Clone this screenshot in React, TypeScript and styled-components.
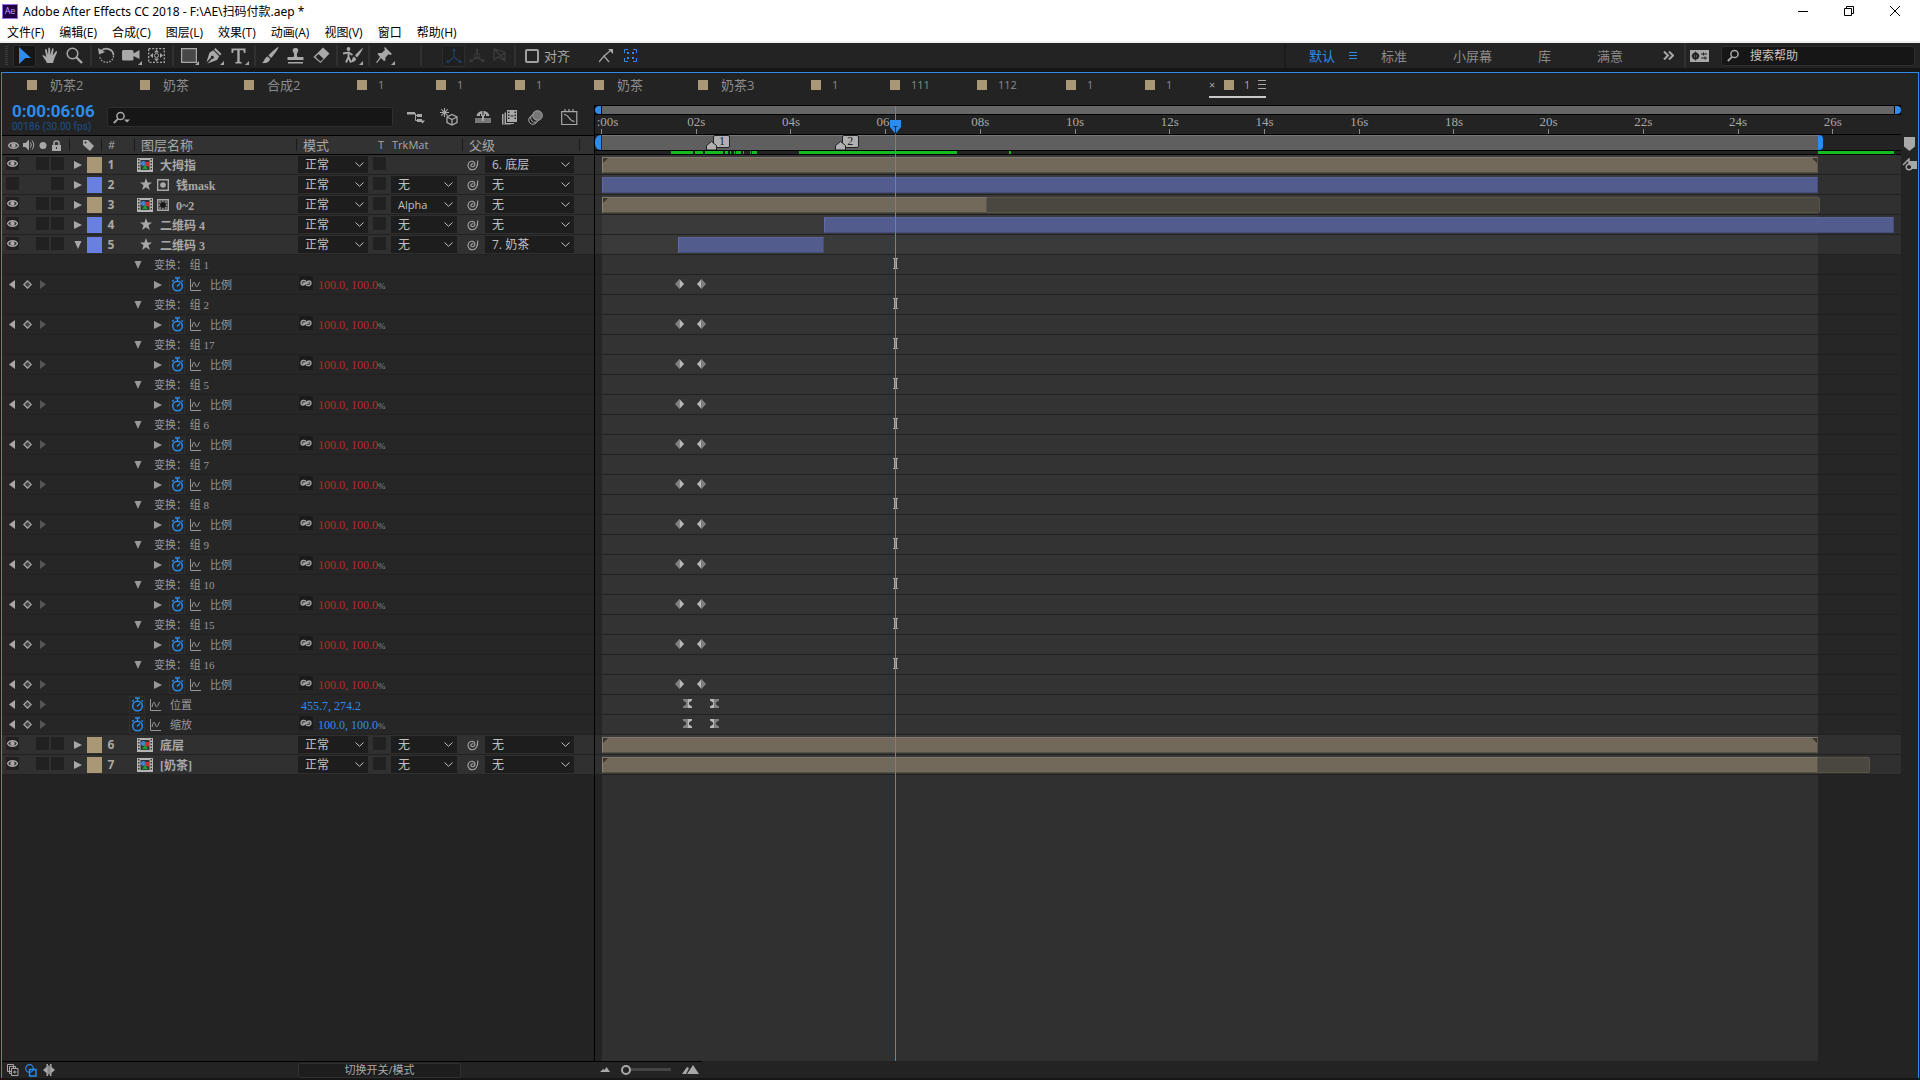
import React from 'react';
import styled, { createGlobalStyle, css } from 'styled-components';

const UI = '"Open Sans", "Noto Sans CJK SC", sans-serif';
const SONG = '"Liberation Serif", "Noto Sans CJK SC", serif';
const BLUE = '#2d8ceb';

const GlobalStyle = createGlobalStyle`
  *, *::before, *::after { box-sizing: border-box; }
  body { margin: 0; background: #161616; overflow: hidden; }
  button, input, select { font: inherit; color: inherit; margin: 0; }
  svg { display: block; flex: none; }
`;

/* ---------- time scale ---------- */

const SPAN = 27.43;
const pct = (t: number) => `${(t / SPAN) * 100}%`;
const WORK_END = 25.67;
const PLAYHEAD = 6.19;

/* ---------- shell ---------- */

const Window = styled.div`
  display: flex;
  flex-direction: column;
  height: 100vh;
  padding-bottom: 2px;
  background: #161616;
  color: #a8a8a8;
  font: 12px/16px ${UI};
`;

const TitleBar = styled.header`
  display: flex;
  align-items: center;
  height: 22px;
  padding: 0 2px;
  background: #fff;
  color: #000;
`;

const AppBadge = styled.span`
  width: 16px;
  height: 15px;
  border: 1px solid #9a6cf0;
  background: #1f0040;
  color: #c99bff;
  font-size: 9px;
  line-height: 12px;
  text-align: center;
`;

const Title = styled.h1`
  flex: 1;
  margin: 2px 0 0 5px;
  font: 400 12px/16px "Noto Sans", "Noto Sans CJK SC", sans-serif;
`;

const WindowButton = styled.button`
  display: grid;
  place-items: center;
  width: 46px;
  height: 20px;
  padding: 0;
  border: 0;
  background: none;
`;

const MenuBar = styled.nav`
  display: flex;
  gap: 15px;
  height: 21px;
  padding: 3px 7px 0;
  border-bottom: 2px solid #f0f0f0;
  background: #fff;
  color: #000;
`;

const MenuItem = styled.button`
  height: 16px;
  padding: 0;
  border: 0;
  background: none;
  font-size: 12px;
  white-space: nowrap;
`;

const Toolbar = styled.div`
  display: flex;
  align-items: center;
  height: 25px;
  margin-bottom: 4px;
  padding: 0 5px;
  background: #232323;
`;

const Grip = styled.span`
  width: 3px;
  height: 19px;
  margin-right: 4px;
  background: repeating-linear-gradient(#3c3c3c 0 1px, #232323 1px 2px);
`;

const Tool = styled.button<{ $active?: boolean; $dim?: boolean }>`
  position: relative;
  display: grid;
  place-items: center;
  width: 23px;
  height: 22px;
  margin: 0 ${p => (p.$dim ? 0 : 1)}px;
  padding: 0;
  border: 1px solid ${p => (p.$active ? '#2d2d2d' : 'transparent')};
  border-radius: 2px;
  background: ${p => (p.$active ? (p.$dim ? '#1f1f1f' : '#161616') : 'none')};
  color: ${p => (p.$dim ? '#3c3c3c' : '#a8a8a8')};
`;

const Corner = styled.i`
  position: absolute;
  right: 0;
  bottom: 1px;
  border: 2px solid;
  border-color: transparent #a8a8a8 #a8a8a8 transparent;
`;

const Divider = styled.span<{ $wide?: boolean }>`
  width: 2px;
  height: 21px;
  margin: 0 ${p => (p.$wide ? 20 : 2)}px 0 ${p => (p.$wide ? 23 : 3)}px;
  background: #303030;
`;

const SnapLabel = styled.label`
  display: flex;
  align-items: center;
  gap: 5px;
  margin: 0 29px 0 7px;
  font-size: 13px;
`;

const Check = styled.input`
  appearance: none;
  width: 14px;
  height: 14px;
  border: 2px solid #a0a0a0;
  border-radius: 2px;
`;

const SnapIcons = styled.div`
  display: flex;
  gap: 11px;
`;

const Workspaces = styled.div`
  display: flex;
  align-items: center;
  height: 100%;
  margin-left: auto;
  border-left: 2px solid #1b1b1b;
`;

const Workspace = styled.button<{ $active?: boolean }>`
  display: flex;
  align-items: center;
  gap: 14px;
  padding: 1px ${p => (p.$active ? 1 : 23)}px 0 23px;
  border: 0;
  background: none;
  color: ${p => (p.$active ? BLUE : '#8c8c8c')};
  font-size: 13px;
  white-space: nowrap;
`;

const IconButton = styled.button`
  display: grid;
  place-items: center;
  padding: 0;
  border: 0;
  background: none;
`;

const WorkspaceEnd = styled.div`
  display: flex;
  align-items: center;
  gap: 12px;
  height: 100%;
  margin-left: 10px;
  padding-left: 4px;
  border-left: 2px solid #303030;
`;

const SearchBox = styled.label<{ $width: number }>`
  display: flex;
  align-items: center;
  gap: 10px;
  width: ${p => p.$width}px;
  height: 20px;
  padding: 0 5px;
  border: 1px solid #2e2e2e;
  border-radius: 3px;
  background: #161616;
`;

const SearchInput = styled.input`
  flex: 1;
  min-width: 0;
  padding: 1px 0 0;
  border: 0;
  outline: 0;
  background: none;
  font-size: 12px;
  &::placeholder { color: #c4c4c4; opacity: 1; }
`;

/* ---------- timeline panel ---------- */

const Panel = styled.main`
  display: flex;
  flex: 1;
  flex-direction: column;
  min-height: 0;
  margin: 0 1px;
  border: 1px solid ${BLUE};
  border-bottom: 0;
  background: #232323;
`;

const Tabs = styled.div`
  display: flex;
  height: 32px;
  padding-left: 25px;
`;

const Tab = styled.button<{ $width: number; $digits?: boolean }>`
  display: flex;
  align-items: center;
  gap: ${p => (p.$digits ? 11 : 13)}px;
  flex: none;
  width: ${p => p.$width}px;
  height: 24px;
  padding: 0;
  border: 0;
  background: none;
  color: #8c8c8c;
  font-size: ${p => (p.$digits ? 11 : 13)}px;
  line-height: 14px;
  white-space: nowrap;
`;

const ActiveTab = styled.div`
  display: flex;
  align-items: center;
  height: 25px;
  margin-left: -15px;
  border-bottom: 2px solid #c8c8c8;
`;

const CloseTab = styled.button`
  width: 15px;
  height: 16px;
  padding: 0;
  border: 0;
  background: none;
  font-size: 11px;
  line-height: 16px;
  text-align: left;
`;

const TabName = styled.span`
  width: 14px;
  margin-left: 10px;
  font-size: 11px;
  line-height: 14px;
`;

const Swatch = styled.i`
  width: 10px;
  height: 10px;
  background: #a99776;
`;

const Body = styled.div`
  display: grid;
  grid-template-columns: 593px minmax(0, 1fr) 17px;
  flex: 1;
  min-height: 0;
`;

const Outline = styled.section`
  border-right: 1px solid #000;
`;

const Controls = styled.div`
  display: flex;
  align-items: center;
  height: 30px;
  padding: 0 16px 6px 10px;
`;

const Clock = styled.div`
  width: 95px;
  font-family: Roboto, sans-serif;
  white-space: nowrap;
`;

const Timecode = styled.div`
  color: ${BLUE};
  font-size: 17px;
  font-weight: 700;
  line-height: 20px;
`;

const Frames = styled.div`
  color: #1d5088;
  font-size: 10px;
  line-height: 12px;
`;

const ControlIcons = styled.div`
  display: grid;
  grid-template-columns: 33px 35px 27px 26px 33px 17px;
  align-items: center;
  justify-items: start;
  margin-left: 14px;
`;

const Columns = styled.div`
  display: flex;
  align-items: center;
  height: 20px;
  border-top: 1px solid #000;
  border-bottom: 1px solid #000;
  background: #323232;
`;

const HeadCell = styled.div<{ $width?: number; $size?: number }>`
  display: flex;
  align-items: center;
  flex: ${p => (p.$width ? 'none' : 1)};
  gap: 4px;
  width: ${p => (p.$width ? `${p.$width}px` : 'auto')};
  height: 12px;
  padding-left: 6px;
  border-right: 1px solid #1a1a1a;
  font-size: ${p => p.$size || 13}px;
  white-space: nowrap;
`;

const HeadText = styled.span<{ $width?: number }>`
  width: ${p => (p.$width ? `${p.$width}px` : 'auto')};
`;

const Small = styled.span`
  margin-right: 4px;
  font-size: 11px;
`;

const Row = styled.div<{ $sub?: boolean }>`
  display: flex;
  align-items: center;
  height: 20px;
  border-bottom: 1px solid #212121;
  background: ${p => (p.$sub ? '#262626' : '#303030')};
`;

const Switches = styled.div`
  display: flex;
  gap: 2px;
  width: 68px;
  padding-left: 4px;
`;

const Switch = styled.button<{ $hidden?: boolean; $first?: boolean }>`
  display: grid;
  place-items: center;
  width: 13px;
  height: 13px;
  margin: 0 ${p => (p.$first ? 15 : 0)}px 2px 0;
  padding: 0;
  border: 0;
  background: #212121;
  visibility: ${p => (p.$hidden ? 'hidden' : 'visible')};
`;

const LabelCell = styled.div`
  display: flex;
  align-items: center;
  gap: 5px;
  width: 32px;
  padding-left: 4px;
`;

const LabelColor = styled.i<{ $color: string }>`
  width: 15px;
  height: 16px;
  background: ${p => p.$color};
`;

const Index = styled.span`
  width: 18px;
  margin-right: 17px;
  font-weight: 700;
  text-align: center;
`;

const NameCell = styled.div`
  display: flex;
  align-items: center;
  flex: 1;
  gap: 4px;
  min-width: 0;
  font: bold 12px/16px ${SONG};
  white-space: nowrap;
`;

const NameText = styled.span`
  padding: 2px 0 0 3px;
`;

const Dropdown = styled.span<{ $width: number }>`
  display: grid;
  grid-template-areas: 'field';
  align-items: center;
  width: ${p => p.$width}px;
  height: 17px;
  background: #1d1d1d;
  color: #c0c0c0;
  > svg { grid-area: field; justify-self: end; margin-right: 4px; pointer-events: none; }
`;

const Field = styled.select<{ $small?: boolean }>`
  grid-area: field;
  appearance: none;
  width: 100%;
  height: 17px;
  padding: 0 0 0 7px;
  border: 0;
  outline: 0;
  background: none;
  font-size: ${p => (p.$small ? 11 : 12)}px;
  line-height: 16px;
`;

const ModeCells = styled.div`
  display: flex;
  align-items: center;
  gap: 5px;
  width: 168px;
`;

const ParentCells = styled.div`
  display: flex;
  align-items: center;
  gap: 6px;
  width: 128px;
`;

const KeyNav = styled.div`
  display: flex;
  align-items: center;
  justify-content: space-between;
  width: 45px;
  padding: 0 1px 0 7px;
`;

const PropName = styled.div<{ $indent: number }>`
  display: flex;
  align-items: center;
  flex: 1;
  padding-left: ${p => p.$indent}px;
  color: #989898;
  font: 11px/16px ${SONG};
  white-space: pre;
`;

const GroupText = styled.span`
  margin-left: 12px;
`;

const Stopwatch = styled.button`
  display: grid;
  place-items: center;
  width: 16px;
  height: 18px;
  margin: 0 5px 0 7px;
  padding: 0;
  border: 1px solid #303030;
  background: none;
  color: ${BLUE};
`;

const PropLabel = styled.span`
  margin-left: 9px;
`;

const ValueCell = styled.div<{ $red?: boolean }>`
  display: flex;
  align-items: center;
  gap: 5px;
  width: 295px;
  color: ${p => (p.$red ? '#bd2626' : BLUE)};
  font: 12px/16px ${SONG};
`;

const LinkBox = styled.button`
  display: grid;
  place-items: center;
  width: 14px;
  height: 14px;
  margin-bottom: 3px;
  padding: 0;
  border: 0;
  background: #1b1b1b;
  color: #a8a8a8;
`;

const Percent = styled.span`
  color: #8c8c8c;
  font-size: 9px;
`;

const Value = styled.span<{ $inset?: boolean }>`
  padding: 2px 0 0 ${p => (p.$inset ? 2 : 0)}px;
`;

/* ---------- time graph ---------- */

const Graph = styled.section`
  position: relative;
  display: flex;
  flex-direction: column;
  min-width: 0;
  overflow: hidden;
`;

const Lane = styled.div<{ $sub?: boolean }>`
  height: 20px;
  padding-left: 7px;
  border-bottom: 1px solid #212121;
  background: ${p => (p.$sub ? '#262626' : '#303030')};
`;

const Track = styled.div<{ $sub?: boolean }>`
  position: relative;
  height: 100%;
  background: linear-gradient(to right, ${p => (p.$sub ? '#333' : '#3a3a3a')} 93.6%, transparent 93.6%);
`;

const EmptyLane = styled.div`
  flex: 1;
  padding-left: 7px;
`;

const EmptyTrack = styled.div`
  height: 100%;
  background: linear-gradient(to right, #303030 93.6%, transparent 93.6%);
`;

const Navigator = styled.div`
  display: flex;
  align-items: stretch;
  gap: 1px;
  height: 10px;
  border: solid #000;
  border-width: 1px 0;
  background: #000;
`;

const NavBar = styled.div`
  flex: 1;
  background: #666;
`;

const Cap = styled.button<{ $right?: boolean }>`
  width: 6px;
  padding: 0;
  border: 0;
  border-radius: ${p => (p.$right ? '0 6px 6px 0' : '6px 0 0 6px')};
  background: ${BLUE};
`;

const Ruler = styled.div`
  height: 19px;
  padding-left: 7px;
`;

const Ticks = styled.div`
  position: relative;
  height: 100%;
`;

const Tick = styled.span`
  position: absolute;
  top: 0;
  display: flex;
  flex-direction: column;
  align-items: center;
  justify-content: space-between;
  width: 41px;
  height: 19px;
  margin-left: -21px;
  font: 13px/14px ${SONG};
  &::after { content: ''; width: 1px; height: 5px; background: #8c8c8c; }
`;

const TickText = styled.span<{ $first?: boolean }>`
  padding-left: ${p => (p.$first ? 12 : 0)}px;
`;

const WorkArea = styled.div`
  display: flex;
  height: 17px;
  border: solid #000;
  border-width: 1px 0;
  gap: 1px;
`;

const WorkTrack = styled.div`
  position: relative;
  flex: 1;
`;

const WorkBar = styled.div`
  height: 15px;
  border-top: 1px solid #777;
  background: #5f5f5f;
`;

const WorkEnd = styled.button`
  position: absolute;
  top: 0;
  width: 5px;
  height: 15px;
  padding: 0;
  border: 0;
  border-radius: 0 4px 4px 0;
  background: ${BLUE};
`;

const Marker = styled.span`
  position: absolute;
  top: 0;
  display: flex;
  align-items: flex-end;
  height: 15px;
  margin-left: -5px;
  > svg { z-index: 1; }
`;

const MarkerTag = styled.span`
  align-self: flex-start;
  width: 17px;
  height: 13px;
  margin-left: -4px;
  border: 1px solid #222;
  border-radius: 2px;
  background: #b0b0b0;
  color: #222;
  font: 12px/11px ${SONG};
  text-align: center;
`;

const CacheLine = styled.div`
  height: 4px;
  padding-left: 7px;
  border-bottom: 1px solid #000;
`;

const Cache = styled.i`
  position: absolute;
  top: 0;
  height: 3px;
  background: #16bd22;
`;

const Clip = styled.div<{ $kind: 'comp' | 'shape' | 'ghost' }>`
  position: absolute;
  top: 2px;
  height: 16px;
  border-style: solid;
  border-width: 1px;
  ${p => p.$kind === 'comp' && css`
    border-color: #81776a #5e5648 #554e42 #8c8273;
    background: #72695a;
  `}
  ${p => p.$kind === 'shape' && css`
    border-color: #5a659c #434c7c #434c7c #5f6aa4;
    background: #525c8d;
  `}
  ${p => p.$kind === 'ghost' && css`
    border-color: #5a5446;
    border-radius: 0 2px 2px 0;
    background: #4a4741;
  `}
`;

const Notch = styled.i<{ $right?: boolean }>`
  position: absolute;
  top: 0;
  ${p => (p.$right ? 'right: 0;' : 'left: 0;')}
  border: solid transparent;
  border-width: ${p => (p.$right ? '0 0 0 5px' : '0 5px 0 0')};
  border-top: 5px solid #3a352c;
`;

const Key = styled.span`
  position: absolute;
  top: 3px;
  display: grid;
  place-items: center;
  width: 13px;
  height: 11px;
  margin-left: -6px;
`;

const PlayLayer = styled.div`
  position: absolute;
  inset: 0 0 0 7px;
  pointer-events: none;
`;

const PlayLine = styled.div`
  position: absolute;
  top: 1px;
  bottom: 0;
  width: 1px;
  background: #3c8ddc;
`;

const PlayHead = styled.div`
  position: absolute;
  top: 15px;
  margin-left: -5px;
`;

const Side = styled.aside`
  display: flex;
  flex-direction: column;
  align-items: center;
  gap: 7px;
  padding-top: 32px;
`;

const Footer = styled.footer`
  display: grid;
  grid-template-columns: 296px 163px 1fr;
  align-items: center;
  height: 17px;
  background: linear-gradient(#000, #000) 0 0 / 700px 1px no-repeat #232323;
`;

const FooterIcons = styled.div`
  display: flex;
  align-items: center;
  gap: 4px;
  padding: 1px 0 0 5px;
`;

const ModeToggle = styled.button`
  height: 15px;
  margin-top: 1px;
  padding: 0;
  border: 1px solid #303030;
  border-radius: 2px;
  background: #1d1d1d;
  font-size: 11px;
  line-height: 12px;
`;

const Zoom = styled.label`
  display: flex;
  align-items: center;
  gap: 11px;
  padding-left: 139px;
`;

const Range = styled.input`
  appearance: none;
  width: 50px;
  height: 10px;
  background: linear-gradient(#444, #444) 8px 3px / 42px 3px no-repeat;
  &::-webkit-slider-thumb {
    appearance: none;
    width: 10px;
    height: 10px;
    border: 2px solid #a8a8a8;
    border-radius: 50%;
    background: #232323;
  }
`;

/* ---------- icons ---------- */

type IconProps = { w: number; h: number; box?: string; children: React.ReactNode };
const Icon = ({ w, h, box, children }: IconProps) => (
  <svg width={w} height={h} viewBox={box || `0 0 ${w} ${h}`} fill="currentColor" aria-hidden="true">{children}</svg>
);
const line = (width = 1) => ({ fill: 'none', stroke: 'currentColor', strokeWidth: width });

const Eye = () => (
  <Icon w={11} h={9}><path d="M0.5 4.5C2.5 .8 8.500 .8 10.500 4.500C8.500 8.200 2.500 8.200 .5 4.500Z" {...line(1.300)} /><circle cx="5.500" cy="4.500" r="2.200" /></Icon>
);
const Right = () => <Icon w={8} h={8}><path d="M0 0L8 4L0 8Z" /></Icon>;
const Down = () => <Icon w={8} h={8}><path d="M0.500 0H7.500L4 8Z" /></Icon>;
const Chevron = () => <Icon w={9} h={5}><path d="M.5 .5L4.500 4.300L8.500 .5" {...line()} /></Icon>;
const Magnifier = ({ arrow }: { arrow?: boolean }) => (
  <Icon w={arrow ? 18 : 13} h={13}>
    <circle cx="7.500" cy="5" r="3.600" {...line(1.500)} /><path d="M5 7.800L.8 12" {...line(1.800)} />
    {arrow && <path d="M11 8.500H17L14 11.500Z" />}
  </Icon>
);
const Spiral = () => (
  <Icon w={13} h={12}><path d="M7.500 5C5.500 4 4.200 6 5.200 7.200C6.500 8.500 9.200 7.300 9 4.800C8.700 1.800 4.500 1.500 2.700 4C1 6.500 2.500 10.500 6 10.700C9.500 11 12.200 7.500 11.700 1.500" {...line(1.100)} /></Icon>
);
const CompIcon = () => (
  <Icon w={16} h={14}>
    <path d="M0 0H16V14H0Z" fill="#b4b4b4" />
    <path d="M1 1H2.500V2.500H1ZM1 4H2.500V5.500H1ZM1 7H2.500V8.500H1ZM1 10H2.500V11.500H1ZM13.500 1H15V2.500H13.500ZM13.500 4H15V5.500H13.500ZM13.500 7H15V8.500H13.500ZM13.500 10H15V11.500H13.500ZM3.500 2H12.500V12H3.500Z" fill="#333" />
    <circle cx="6.300" cy="5.500" r="2.400" fill="#3d84dc" /><path d="M8 4H12V8.500H8Z" fill="#cf3030" /><path d="M8 6.500L11 11.300H5Z" fill="#1da03a" />
  </Icon>
);
const Star = () => <Icon w={16} h={13}><path d="M9 0L10.600 4.500H15L11.500 7.300L12.800 12L9 9.200L5.200 12L6.500 7.300L3 4.500H7.400Z" /></Icon>;
const Matte = () => <Icon w={12} h={12}><path d="M.7 .7H11.300V11.300H.7Z" {...line(1.400)} /><circle cx="6" cy="6" r="2.800" /></Icon>;
const Checker = () => (
  <Icon w={12} h={12}><path d="M.7 .7H11.300V11.300H.7Z" {...line(1.400)} /><path d="M2 2H4V4H2ZM8 2H10V4H8ZM2 8H4V10H2ZM8 8H10V10H8ZM5 1.500H7V3H5ZM5 9H7V10.500H5ZM1.500 5H3V7H1.500ZM9 5H10.500V7H9Z" fill="#777" /><circle cx="6" cy="6" r="2.300" fill="#151515" /></Icon>
);
const Watch = () => <Icon w={13} h={15}><circle cx="6.500" cy="9" r="4.800" {...line(1.500)} /><path d="M4 1H9M6.500 1V4M6 9.500L9 6.500M1 4.500L3 3M12 4.500L10.500 3.200" {...line(1.400)} /></Icon>;
const GraphIcon = () => <Icon w={11} h={12}><path d="M.5 0V11.500H11" {...line()} /><path d="M2 8C3.500 2 4 2 5.500 6C7 10 7.500 7 9.500 3" {...line()} /></Icon>;
const Link = () => <Icon w={12} h={8}><path d="M6 2.500C4.500 .8 1 1 1 4C1 6.500 4 6.500 5.500 4.500M2.500 4H6.500" {...line(1.400)} /><path d="M6 5.500C7.500 7.200 11 7 11 4C11 1.500 8 1.500 6.500 3.500M9.500 4H5.500" {...line(1.400)} /></Icon>;
const MoreLines = ({ h = 8 }: { h?: number }) => <Icon w={8} h={h}><path d={h === 8 ? 'M0 .5H8M0 3.500H8M0 6.500H8' : 'M0 .5H8M0 4.500H8M0 8.500H8'} {...line()} /></Icon>;

const tools: { name: string; corner?: boolean; active?: boolean; gap?: boolean; art: React.ReactNode }[] = [
  { name: '选取工具', active: true, gap: true, art: <Icon w={13} h={18}><path d="M1 0L13 11H7.500L1 17Z" fill={BLUE} /></Icon> },
  { name: '手形工具', art: <Icon w={16} h={17}><path d="M5 16C3.500 13 1.500 10.500 .2 8.500C1.500 7.500 3 8.700 4.300 10L3 3C3.300 1.800 4.500 1.800 4.800 3L6 8L6.300 1.500C6.600 .2 7.900 .2 8.100 1.500L8.400 8L10 2C10.500 1 11.700 1.200 11.600 2.500L10.800 8.500L13.600 4.500C14.500 3.800 15.500 4.500 15 5.500L12.500 11L11 16Z" /></Icon> },
  { name: '缩放工具', art: <Icon w={17} h={17}><circle cx="6.500" cy="6.500" r="5.300" {...line(1.500)} /><path d="M10.500 10.500L16 16" {...line(2.400)} /></Icon> },
  { name: '旋转工具', gap: true, art: <Icon w={17} h={17}><path d="M3 4C7 -.5 15.500 2 15.500 8.500" {...line(1.600)} /><path d="M15.500 9C15 17 3 18 1.500 9" {...line(1.300)} strokeDasharray="1.500 1.500" /><path d="M0 1L1 7.500L7 5Z" /></Icon> },
  { name: '摄像机工具', corner: true, art: <Icon w={19} h={14}><path d="M0 2.500Q0 1 1.500 1H10Q11.500 1 11.500 2.500V4.500L17.500 1V10L11.500 7V10Q11.500 11.500 10 11.500H1.500Q0 11.500 0 10Z" /></Icon> },
  { name: '锚点工具', art: <Icon w={17} h={15}><path d="M.7 .7H16.300V14.300H.7Z" {...line(1.300)} strokeDasharray="2 1.500" /><circle cx="8.500" cy="7.500" r="2" {...line(1)} /><path d="M8.500 1.500L11 4.500H6ZM8.500 13.500L11 10.500H6ZM2 7.500L5 5V10ZM15 7.500L12 5V10Z" /></Icon> },
  { name: '矩形工具', corner: true, gap: true, art: <Icon w={16} h={15}><path d="M.6 .6H15.400V14.400H.6Z" fill="#484848" stroke="#a8a8a8" strokeWidth="1.200" /></Icon> },
  { name: '钢笔工具', corner: true, art: <Icon w={16} h={16}><path d="M9.500 0L15.500 6L14 7.500L8 1.500ZM7.300 2.300L13.200 8.200L11 12L1.500 15.500L6 10.800A1.500 1.500 0 1 0 4.900 9.700L.4 14.300L3.500 4.500Z" /></Icon> },
  { name: '横排文字工具', corner: true, art: <Icon w={16} h={16}><path d="M.5 .5H14.500V5H13L12.200 2.200H8.700V13.500L10.700 14.200V15.500H4.300V14.200L6.300 13.500V2.200H2.800L2 5H.5Z" /></Icon> },
  { name: '画笔工具', gap: true, art: <Icon w={17} h={17}><path d="M16.500 0C17 1 11 9.500 9 11L6.500 8.500C8 6.500 15 0 16.500 0ZM5.800 9.500L8.200 12C7 16 3 16.500 0 16C3 14 2 10.500 5.800 9.500Z" /></Icon> },
  { name: '仿制图章工具', art: <Icon w={17} h={16}><path d="M8.500 0C11 0 12 2 10.800 4C9.500 6 9.700 8 10.500 9H16.500V12H.5V9H6.500C7.300 8 7.500 6 6.200 4C5 2 6 0 8.500 0ZM1 14H16V15.500H1Z" /></Icon> },
  { name: '橡皮擦工具', art: <Icon w={18} h={17}><path d="M11 .5L17.500 6.500L8.500 16L1.500 10Z" /><path d="M3.500 10L6.500 7L11.500 11.800L8.500 14.500Z" fill="#232323" /></Icon> },
  { name: 'Roto 笔刷工具', corner: true, gap: true, art: <Icon w={20} h={17}><circle cx="5.500" cy="2" r="1.900" /><path d="M5.500 4.500V10L3 15.500M5.500 10L8 15.500M0 6.500L5.500 5.500L9.500 8" {...line(1.900)} /><path d="M20 1C19 4 15.500 9 14 10.500L12 8.500C14 6 18.500 1.500 20 1ZM11 9.500L13.300 12C12 15 9 15.500 7.500 15C9.500 13 9 10.500 11 9.500Z" /></Icon> },
  { name: '操控点工具', corner: true, gap: true, art: <Icon w={17} h={17}><path d="M9 0L16 7L14.500 8L12.500 7.300L9.500 10.500L9.300 13.500L8 14L5 11L1 16L0 15.500L4 10L1.500 7L2.500 6L5.800 6L9 3L8.200 1Z" /></Icon> },
];

const axis = [
  <Icon w={16} h={16}><path d="M8 2V9L2 14M8 9L14 14" {...line(1.300)} stroke="#1d4066" /><path d="M8 0L10 3H6ZM0 15L1.500 11.500L4 14.500ZM16 15L14.500 11.500L12 14.500Z" fill="#1d4066" /></Icon>,
  <Icon w={16} h={16}><circle cx="8" cy="8" r="3" {...line()} /><path d="M8 2V9L2 13M8 9L14 13" {...line(1.300)} /><path d="M8 0L10 3H6ZM0 14L1.500 10.500L4 13.500ZM16 14L14.500 10.500L12 13.500Z" /></Icon>,
  <Icon w={14} h={15}><path d="M1 1V12L5 9L12 13V5L5 9M1 1L12 4M1 1L12 12" {...line(1.200)} /></Icon>,
];

/* ---------- data ---------- */

const menus = ['文件(F)', '编辑(E)', '合成(C)', '图层(L)', '效果(T)', '动画(A)', '视图(V)', '窗口', '帮助(H)'];
const tabs: [string, number][] = [
  ['奶茶2', 113], ['奶茶', 104], ['合成2', 113], ['1', 79], ['1', 79], ['1', 79], ['奶茶', 104],
  ['奶茶3', 113], ['1', 79], ['111', 87], ['112', 89], ['1', 79], ['1', 79],
];

type ClipData = { from: number; to: number; kind: 'comp' | 'shape' | 'ghost'; left?: boolean; right?: boolean };
type Layer = {
  id: number; name: string; shape?: boolean; mask?: 'matte' | 'checker'; hidden?: boolean; open?: boolean;
  matte?: string; parent: string; clips: ClipData[];
};
const layers: Layer[] = [
  { id: 1, name: '大拇指', parent: '6. 底层', clips: [{ from: 0, to: 25.68, kind: 'comp', left: true, right: true }] },
  { id: 2, name: '钱mask', shape: true, mask: 'matte', hidden: true, matte: '无', parent: '无', clips: [{ from: 0, to: 25.68, kind: 'shape' }] },
  { id: 3, name: '0~2', mask: 'checker', matte: 'Alpha', parent: '无', clips: [{ from: 8.11, to: 25.71, kind: 'ghost' }, { from: 0, to: 8.13, kind: 'comp', left: true }] },
  { id: 4, name: '二维码 4', shape: true, matte: '无', parent: '无', clips: [{ from: 4.69, to: 27.29, kind: 'shape' }] },
  { id: 5, name: '二维码 3', shape: true, open: true, matte: '无', parent: '7. 奶茶', clips: [{ from: 1.605, to: 4.69, kind: 'shape' }] },
  { id: 6, name: '底层', matte: '无', parent: '无', clips: [{ from: 0, to: 25.68, kind: 'comp', left: true, right: true }] },
  { id: 7, name: '[奶茶]', matte: '无', parent: '无', clips: [{ from: 25.6, to: 26.78, kind: 'ghost' }, { from: 0, to: 25.68, kind: 'comp', left: true }] },
];
const groups = [1, 2, 17, 5, 6, 7, 8, 9, 10, 15, 16];
const cache: [number, number][] = [
  [1.46, 1.92], [1.96, 2.13], [2.18, 2.56], [2.6, 2.66], [2.7, 2.72], [2.78, 2.81], [2.83, 2.94], [2.97, 2.99],
  [3.12, 3.14], [3.17, 3.27], [4.16, 7.5], [8.6, 8.64], [25.68, 27.29],
];
const markers: [string, number][] = [['1', 2.31], ['2', 5.02]];

/* ---------- outline rows ---------- */

const Select = ({ label, value, width }: { label: string; value: string; width: number }) => (
  <Dropdown $width={width}>
    <Field aria-label={label} defaultValue={value} $small={value === 'Alpha'}><option>{value}</option></Field>
    <Chevron />
  </Dropdown>
);

const LayerRow = ({ layer }: { layer: Layer }) => (
  <Row>
    <Switches>
      <Switch $first aria-label="视频">{!layer.hidden && <Eye />}</Switch>
      <Switch aria-label="独奏" $hidden={layer.hidden} />
      <Switch aria-label="锁定" />
    </Switches>
    <LabelCell>{layer.open ? <Down /> : <Right />}<LabelColor $color={layer.shape ? '#6a80e0' : '#a99776'} /></LabelCell>
    <Index>{layer.id}</Index>
    <NameCell>
      {layer.shape ? <Star /> : <CompIcon />}
      {layer.mask === 'matte' && <Matte />}
      {layer.mask === 'checker' && <Checker />}
      <NameText>{layer.name}</NameText>
    </NameCell>
    <ModeCells>
      <Select label="模式" value="正常" width={70} />
      <Switch aria-label="保留透明度" />
      {layer.matte && <Select label="TrkMat" value={layer.matte} width={66} />}
    </ModeCells>
    <ParentCells><Spiral /><Select label="父级" value={layer.parent} width={89} /></ParentCells>
  </Row>
);

const KeyControls = () => (
  <KeyNav>
    <Icon w={6} h={9}><path d="M6 0V9L0 4.500Z" /></Icon>
    <Icon w={9} h={9}><path d="M4.500 .8L8.200 4.500L4.500 8.200L.8 4.500Z" fill="#444" stroke="#a8a8a8" strokeWidth="1.200" /></Icon>
    <Icon w={6} h={9}><path d="M0 0V9L6 4.500Z" fill="#555" /></Icon>
  </KeyNav>
);

const GroupRow = ({ n }: { n: number }) => (
  <Row $sub><PropName $indent={132}><Down /><GroupText>{`变换： 组 ${n}`}</GroupText></PropName></Row>
);

const PropRow = ({ name, value, percent, nested }: { name: string; value: string; percent?: boolean; nested?: boolean }) => (
  <Row $sub>
    <KeyControls />
    <PropName $indent={nested ? 107 : 75}>
      {nested && <Right />}
      <Stopwatch aria-label={`${name}关键帧`}><Watch /></Stopwatch>
      <GraphIcon />
      <PropLabel>{name}</PropLabel>
    </PropName>
    <ValueCell $red={nested}>
      {percent && <LinkBox aria-label="约束比例"><Link /></LinkBox>}
      <Value $inset={!percent}>{value}{percent && <Percent>%</Percent>}</Value>
    </ValueCell>
  </Row>
);

/* ---------- graph rows ---------- */

const LayerLane = ({ layer }: { layer: Layer }) => (
  <Lane>
    <Track>
      {layer.clips.map(c => (
        <Clip key={c.from} $kind={c.kind} style={{ left: pct(c.from), width: pct(c.to - c.from) }}>
          {c.left && <Notch />}
          {c.right && <Notch $right />}
        </Clip>
      ))}
    </Track>
  </Lane>
);

const DiamondKey = ({ t, flip }: { t: number; flip?: boolean }) => (
  <Key style={{ left: pct(t) }}>
    <Icon w={9} h={10}>
      <path d="M4.500 0V10L0 5Z" fill={flip ? '#b8b8b8' : '#808080'} /><path d="M4.500 0V10L9 5Z" fill={flip ? '#808080' : '#b8b8b8'} />
    </Icon>
  </Key>
);

const EaseKey = ({ t, flip }: { t: number; flip?: boolean }) => (
  <Key style={{ left: pct(t) }}>
    <Icon w={9} h={9}>
      <path d="M0 0H4.500V9H0V7.500L3 5.500V3.500L0 1.500Z" fill={flip ? '#b8b8b8' : '#808080'} />
      <path d="M9 0H4.500V9H9V7.500L6 5.500V3.500L9 1.500Z" fill={flip ? '#808080' : '#b8b8b8'} />
    </Icon>
  </Key>
);

const Beam = () => (
  <Key style={{ left: pct(PLAYHEAD) }}><Icon w={5} h={11}><path d="M0 .5H5M0 10.500H5M1.500 0V11M3.500 0V11" {...line()} /></Icon></Key>
);

export default function App() {
  return (
    <>
      <GlobalStyle />
      <Window>
        <TitleBar>
          <AppBadge>Ae</AppBadge>
          <Title>Adobe After Effects CC 2018 - F:\AE\扫码付款.aep *</Title>
          <WindowButton aria-label="最小化"><Icon w={10} h={10}><path d="M0 5.500H10" {...line()} /></Icon></WindowButton>
          <WindowButton aria-label="还原"><Icon w={10} h={10}><path d="M.5 2.500H7.500V9.500H.5ZM2.500 2.500V.5H9.500V7.500H7.500" {...line()} /></Icon></WindowButton>
          <WindowButton aria-label="关闭"><Icon w={10} h={10}><path d="M0 0L10 10M10 0L0 10" {...line()} /></Icon></WindowButton>
        </TitleBar>
        <MenuBar>{menus.map(m => <MenuItem key={m}>{m}</MenuItem>)}</MenuBar>

        <Toolbar>
          <Grip />
          {tools.map((t, i) => (
            <React.Fragment key={t.name}>
              {t.gap && i > 0 && <Divider />}
              <Tool $active={t.active} aria-label={t.name}>{t.art}{t.corner && <Corner />}</Tool>
            </React.Fragment>
          ))}
          <Divider $wide />
          {axis.map((a, i) => <Tool key={i} $dim $active={i === 0} aria-label="轴模式">{a}</Tool>)}
          <Divider />
          <SnapLabel><Check type="checkbox" />对齐</SnapLabel>
          <SnapIcons>
            <IconButton aria-label="边缘对齐"><Icon w={14} h={14}><path d="M0 13L5 7L10 13M5 7L11 2" {...line(1.200)} /><path d="M9 0H14V5Z" /></Icon></IconButton>
            <IconButton aria-label="折叠对齐"><Icon w={13} h={13}><path d="M.5 4V.5H4M9 .5H12.500V4M12.500 9V12.500H9M4 12.500H.5V9" {...line()} stroke={BLUE} /><path d="M3 3H5V5H3ZM8 3H10V5H8ZM3 8H5V10H3ZM8 8H10V10H8Z" fill={BLUE} /></Icon></IconButton>
          </SnapIcons>
          <Workspaces>
            <Workspace $active>默认<MoreLines /></Workspace>
            <Workspace>标准</Workspace>
            <Workspace>小屏幕</Workspace>
            <Workspace>库</Workspace>
            <Workspace>满意</Workspace>
            <IconButton aria-label="更多工作区"><Icon w={28} h={9}><path d="M18 .5L22 4.500L18 8.500M23 .5L27 4.500L23 8.500" {...line(2)} /></Icon></IconButton>
            <WorkspaceEnd>
              <IconButton aria-label="同步设置">
                <Icon w={19} h={12}><path d="M0 0H19V12H0Z" /><circle cx="5.500" cy="6" r="2.500" fill="none" stroke="#232323" strokeWidth="2" /><path d="M5.500 1.500V10.500M1.500 6H9.500M11 4H17M11 8H17M13.500 2.500V5.500M15 6.500V9.500" stroke="#232323" strokeWidth="1.100" /></Icon>
              </IconButton>
              <SearchBox $width={194}><Magnifier /><SearchInput aria-label="搜索帮助" placeholder="搜索帮助" /></SearchBox>
            </WorkspaceEnd>
          </Workspaces>
        </Toolbar>

        <Panel>
          <Tabs>
            {tabs.map(([name, width], i) => <Tab key={i} $width={width} $digits={/^\d+$/.test(name)}><Swatch />{name}</Tab>)}
            <ActiveTab>
              <CloseTab aria-label="关闭选项卡">×</CloseTab>
              <Swatch />
              <TabName>1</TabName>
              <MoreLines h={9} />
            </ActiveTab>
          </Tabs>

          <Body>
            <Outline>
              <Controls>
                <Clock>
                  <Timecode>0:00:06:06</Timecode>
                  <Frames>00186 (30.00 fps)</Frames>
                </Clock>
                <SearchBox $width={287}><Magnifier arrow /><SearchInput aria-label="搜索图层" /></SearchBox>
                <ControlIcons>
                  <IconButton aria-label="合成微型流程图"><Icon w={18} h={14}><path d="M0 2H8V4.500H0ZM10 4H15V7H10ZM10 9H15V12H10Z" /><path d="M4 3.500H8.500V10.500H11M8 5.500H11" {...line()} /><path d="M13 10.500H18L15.500 13.500Z" /></Icon></IconButton>
                  <IconButton aria-label="草图 3D"><Icon w={18} h={18}><path d="M4.500 0V9M0 4.500H9M1.300 1.300L7.700 7.700M7.700 1.300L1.300 7.700" {...line(1.100)} /><path d="M7 9L12 6.500L17 9V14.500L12 17L7 14.500ZM7 9L12 11.500L17 9M12 11.500V17" {...line(1.300)} /></Icon></IconButton>
                  <IconButton aria-label="隐藏图层"><Icon w={16} h={14}><path d="M0 8H16V13H0Z" fill="#777" /><path d="M1.500 6C2 2.500 5 1 8 1C11 1 14 2.500 14.500 6Z" /><path d="M8 0V10M5.500 4V8M10.500 4V8" stroke="#232323" strokeWidth="1" /><path d="M7 5H9V11H7Z" /></Icon></IconButton>
                  <IconButton aria-label="帧混合"><Icon w={15} h={15}><path d="M5 0H15V12H5ZM2.500 2.500H4V13H12V14H2.500ZM0 4H1.500V15H9V14.500H0Z" /><path d="M6 1.500H7.500V3H6ZM6 4.500H7.500V6H6ZM6 7.500H7.500V9H6ZM12.500 1.500H14V3H12.500ZM12.500 4.500H14V6H12.500ZM12.500 7.500H14V9H12.500ZM8.500 5.500H11.500V6.500H8.500Z" fill="#232323" /></Icon></IconButton>
                  <IconButton aria-label="运动模糊"><Icon w={15} h={15}><circle cx="5" cy="10" r="4.300" {...line()} /><circle cx="7" cy="8" r="4.300" fill="#232323" stroke="currentColor" /><circle cx="9.500" cy="5.500" r="4.800" fill="#777" stroke="currentColor" /></Icon></IconButton>
                  <IconButton aria-label="图表编辑器"><Icon w={17} h={17}><path d="M.7 2.700H15.800V15.500H.7ZM4 0V3M8 0V3M12 0V3" {...line(1.200)} /><path d="M3 5.500C9 5.500 7 12 13.500 12.500" {...line(1.200)} /></Icon></IconButton>
                </ControlIcons>
              </Controls>

              <Columns>
                <HeadCell $width={68}>
                  <Eye />
                  <Icon w={12} h={12}><path d="M0 4H2.500L6 .5V11.500L2.500 8H0Z" /><path d="M7.500 3.500Q9 6 7.500 8.500M9 1.500Q12.500 6 9 10.500" {...line()} /></Icon>
                  <Icon w={9} h={7}><circle cx="4" cy="3.500" r="3.500" /></Icon>
                  <Icon w={9} h={11}><path d="M0 5H9V11H0Z" /><path d="M2 5V3C2 .3 7 .3 7 3V5" {...line(1.500)} /><path d="M4 7H5V9H4Z" fill="#323232" /></Icon>
                </HeadCell>
                <HeadCell $width={32}><Icon w={20} h={12}><path d="M7 1H12L18 7L14 12L7 6Z" /><circle cx="9.500" cy="3.500" r="1.100" fill="#323232" /></Icon></HeadCell>
                <HeadCell $width={33} $size={11}>#</HeadCell>
                <HeadCell>图层名称</HeadCell>
                <HeadCell $width={166}><HeadText $width={71}>模式</HeadText><Small>T</Small><Small>TrkMat</Small></HeadCell>
                <HeadCell $width={117}>父级</HeadCell>
                <HeadText $width={14} />
              </Columns>

              {layers.slice(0, 5).map(l => <LayerRow key={l.id} layer={l} />)}
              {groups.map(n => (
                <React.Fragment key={n}>
                  <GroupRow n={n} />
                  <PropRow name="比例" value="100.0, 100.0" percent nested />
                </React.Fragment>
              ))}
              <PropRow name="位置" value="455.7, 274.2" />
              <PropRow name="缩放" value="100.0, 100.0" percent />
              {layers.slice(5).map(l => <LayerRow key={l.id} layer={l} />)}
            </Outline>

            <Graph>
              <Navigator><Cap aria-label="导航器开始" /><NavBar /><Cap $right aria-label="导航器结束" /></Navigator>
              <Ruler>
                <Ticks>
                  {Array.from({ length: 14 }, (_, i) => (
                    <Tick key={i} style={{ left: pct(i * 2) }}>
                      <TickText $first={i === 0}>{i === 0 ? ':00s' : `${String(i * 2).padStart(2, '0')}s`}</TickText>
                    </Tick>
                  ))}
                </Ticks>
              </Ruler>
              <WorkArea>
                <Cap aria-label="工作区域开头" />
                <WorkTrack>
                  <WorkBar style={{ width: pct(WORK_END) }} />
                  <WorkEnd aria-label="工作区域结尾" style={{ left: pct(25.67) }} />
                  {markers.map(([n, t]) => (
                    <Marker key={n} style={{ left: pct(t) }}>
                      <Icon w={11} h={9}><path d="M.5 9V4.500L5.500 .5L10.500 4.500V9Z" fill="#b0b0b0" stroke="#222" /></Icon>
                      <MarkerTag>{n}</MarkerTag>
                    </Marker>
                  ))}
                </WorkTrack>
              </WorkArea>
              <CacheLine>
                <Ticks>{cache.map(([a, b]) => <Cache key={a} style={{ left: pct(a), width: pct(b - a) }} />)}</Ticks>
              </CacheLine>

              {layers.slice(0, 5).map(l => <LayerLane key={l.id} layer={l} />)}
              {groups.map(n => (
                <React.Fragment key={n}>
                  <Lane $sub><Track $sub><Beam /></Track></Lane>
                  <Lane $sub><Track $sub><DiamondKey t={1.62} /><DiamondKey t={2.1} flip /></Track></Lane>
                </React.Fragment>
              ))}
              {[0, 1].map(n => (
                <Lane $sub key={n}><Track $sub><EaseKey t={1.8} /><EaseKey t={2.37} flip /></Track></Lane>
              ))}
              {layers.slice(5).map(l => <LayerLane key={l.id} layer={l} />)}
              <EmptyLane><EmptyTrack /></EmptyLane>

              <PlayLayer>
                <PlayLine style={{ left: pct(PLAYHEAD) }} />
                <PlayHead style={{ left: pct(PLAYHEAD) }}>
                  <Icon w={11} h={14}><path d="M0 0H11V7L5.500 14L0 7Z" fill={BLUE} /><path d="M3.500 6.500H7.500M5.500 6.500V14" stroke="#14304f" /></Icon>
                </PlayHead>
              </PlayLayer>
            </Graph>

            <Side>
              <Icon w={11} h={14}><path d="M0 0H11V9.500L5.500 14L0 9.500Z" /></Icon>
              <Icon w={15} h={13}><path d="M7 3H15V11H7Z" /><path d="M1 7L7 1V8" {...line(1.500)} /><circle cx="7" cy="9" r="2.800" fill="#232323" stroke="currentColor" strokeWidth="1.400" /></Icon>
            </Side>
          </Body>

          <Footer>
            <FooterIcons>
              <Icon w={12} h={12}><path d="M.5 .5H6.500V7.500H.5ZM2.500 2.500H8.500V9.500H2.500Z" {...line()} /><path d="M4.500 4.500H11V11.500H4.500Z" fill="#232323" stroke="currentColor" /><path d="M6 8H9.500M7.750 6.500V9.500" {...line()} /></Icon>
              <Icon w={16} h={13}><circle cx="6.500" cy="4.500" r="3.800" {...line(1.200)} stroke={BLUE} /><path d="M6.500 5.500H13V12H6.500Z" fill="none" stroke={BLUE} strokeWidth="1.400" /></Icon>
              <Icon w={12} h={12}><path d="M3.500 0H5V12H3.500V9L0 6L3.500 3ZM8.500 0H7V12H8.500V9L12 6L8.500 3Z" /><path d="M4.500 1.500H7.500V10.500H4.500Z" fill="#888" /></Icon>
            </FooterIcons>
            <ModeToggle>切换开关/模式</ModeToggle>
            <Zoom>
              <Icon w={10} h={5}><path d="M0 5L3 2L4.500 3L6.500 0L10 5Z" /></Icon>
              <Range type="range" aria-label="时间轴缩放" min="0" max="100" defaultValue="0" />
              <Icon w={17} h={9}><path d="M0 9L5 2L7 3L4 9ZM5 9L11 0L17 9Z" /></Icon>
            </Zoom>
          </Footer>
        </Panel>
      </Window>
    </>
  );
}
